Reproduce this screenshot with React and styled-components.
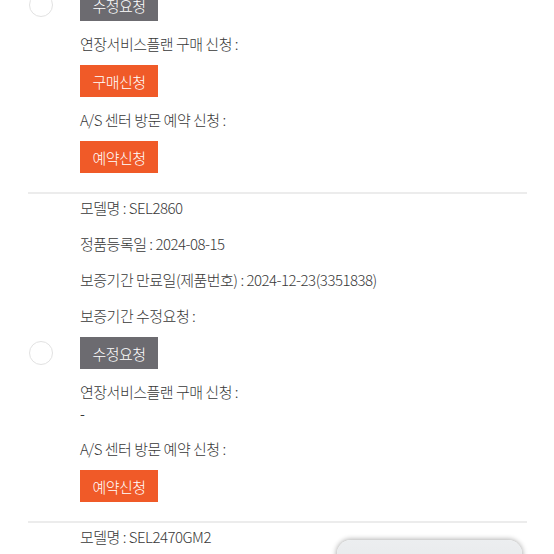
import styled, { createGlobalStyle } from "styled-components";

const GlobalStyle = createGlobalStyle`
  html, body {
    margin: 0;
    padding: 0;
    background: #ffffff;
    overflow: hidden;
  }
  body {
    font-family: "Noto Sans CJK KR", "Noto Sans", sans-serif;
    color: #383838;
  }
`;

const Page = styled.main`
  width: 554px;
  height: 554px;
  overflow: hidden;
  position: relative;
`;

// list is scrolled so the first product is partly out of view
const List = styled.ul`
  list-style: none;
  margin: -154px 27px 0 28px;
  padding: 0;
`;

const Item = styled.li`
  display: flex;
  flex-direction: column;
  padding: 3px 0 19px 52px;
  border-bottom: 2px solid #ececec;
`;

const Label = styled.p`
  margin: 0;
  font-size: 15px;
  line-height: 21px;
  letter-spacing: -0.5px;
  font-weight: 300;
`;

const InfoLine = styled(Label)`
  margin-bottom: 15px;
`;

const Field = styled.div`
  display: flex;
  flex-direction: column;
  gap: 11px;
  margin-bottom: 12px;

  &:last-child {
    margin-bottom: 0;
  }
`;

const Value = styled.p`
  margin: -8px 0 5px;
  font-size: 14px;
  line-height: 16px;
`;

const ButtonRow = styled.div`
  display: flex;
  align-items: center;
  gap: 27px;
  margin-left: ${({ $withRadio }) => ($withRadio ? "-52px" : "0")};
`;

const Radio = styled.span`
  width: 22px;
  height: 22px;
  margin-left: 1px;
  border-radius: 50%;
  border: 1.5px solid #e2e2e2;
  background: #fff;
  flex-shrink: 0;
`;

const ActionButton = styled.button`
  display: block;
  width: 78px;
  height: 32px;
  border: none;
  border-radius: 0;
  padding: 0;
  font-family: inherit;
  font-size: 15px;
  letter-spacing: -0.5px;
  font-weight: 300;
  color: #ffffff;
  background: ${({ $tone }) => ($tone === "gray" ? "#6c6b70" : "#f05a28")};
  cursor: pointer;
`;

const FloatingBar = styled.div`
  position: fixed;
  left: 337px;
  top: 540px;
  width: 185px;
  height: 40px;
  border-radius: 14px;
  background: linear-gradient(#eceef0, #e6e7e9);
  box-shadow: 0 0 5px 1px rgba(0, 0, 0, 0.3);
`;

const products = [
  {
    model: "SEL1855",
    registered: "2024-08-15",
    expires: "2024-12-23(3351837)",
    planAvailable: true,
  },
  {
    model: "SEL2860",
    registered: "2024-08-15",
    expires: "2024-12-23(3351838)",
    planAvailable: false,
  },
  {
    model: "SEL2470GM2",
    registered: "2024-08-15",
    expires: "2024-12-23(3351839)",
    planAvailable: false,
  },
];

function ProductItem({ product }) {
  return (
    <Item>
      <InfoLine>모델명 : {product.model}</InfoLine>
      <InfoLine>정품등록일 : {product.registered}</InfoLine>
      <InfoLine>보증기간 만료일(제품번호) : {product.expires}</InfoLine>
      <Field>
        <Label>보증기간 수정요청 :</Label>
        <ButtonRow $withRadio>
          <Radio />
          <ActionButton $tone="gray">수정요청</ActionButton>
        </ButtonRow>
      </Field>
      <Field>
        <Label>연장서비스플랜 구매 신청 :</Label>
        {product.planAvailable ? (
          <ButtonRow>
            <ActionButton>구매신청</ActionButton>
          </ButtonRow>
        ) : (
          <Value>-</Value>
        )}
      </Field>
      <Field>
        <Label>A/S 센터 방문 예약 신청 :</Label>
        <ButtonRow>
          <ActionButton>예약신청</ActionButton>
        </ButtonRow>
      </Field>
    </Item>
  );
}

export default function App() {
  return (
    <Page>
      <GlobalStyle />
      <List>
        {products.map((p) => (
          <ProductItem key={p.model} product={p} />
        ))}
      </List>
      <FloatingBar />
    </Page>
  );
}
